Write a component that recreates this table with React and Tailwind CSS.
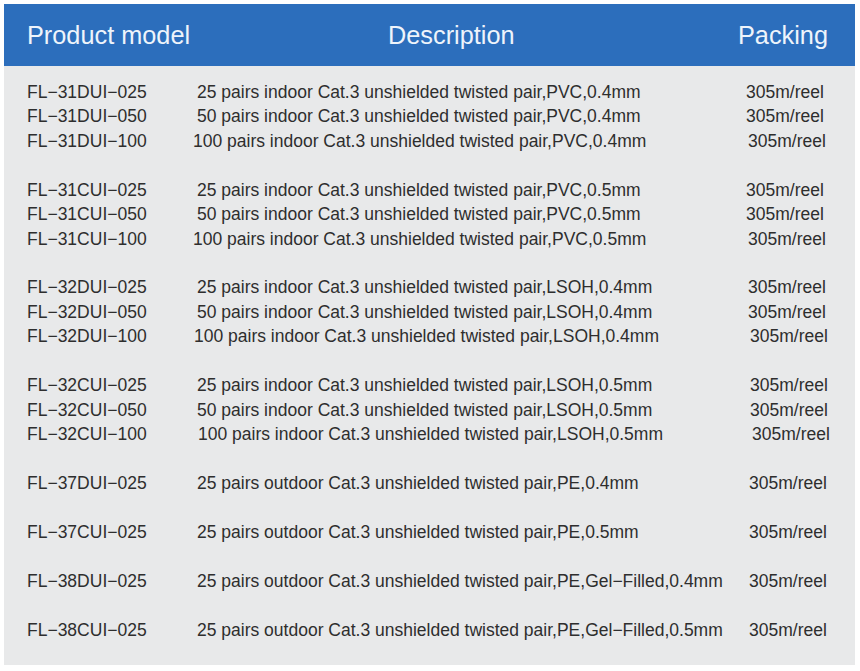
import React from "react";

const rows = [
  { m: "FL−31DUI−025", d: "25 pairs indoor Cat.3 unshielded twisted pair,PVC,0.4mm", dc: "pl-[4px]", pc: "pl-[1px]" },
  { m: "FL−31DUI−050", d: "50 pairs indoor Cat.3 unshielded twisted pair,PVC,0.4mm", dc: "pl-[4px]", pc: "pl-[1px]" },
  { m: "FL−31DUI−100", d: "100 pairs indoor Cat.3 unshielded twisted pair,PVC,0.4mm", dc: "pl-0", pc: "pl-[3px]" },
  null,
  { m: "FL−31CUI−025", d: "25 pairs indoor Cat.3 unshielded twisted pair,PVC,0.5mm", dc: "pl-[4px]", pc: "pl-[1px]" },
  { m: "FL−31CUI−050", d: "50 pairs indoor Cat.3 unshielded twisted pair,PVC,0.5mm", dc: "pl-[4px]", pc: "pl-[1px]" },
  { m: "FL−31CUI−100", d: "100 pairs indoor Cat.3 unshielded twisted pair,PVC,0.5mm", dc: "pl-0", pc: "pl-[3px]" },
  null,
  { m: "FL−32DUI−025", d: "25 pairs indoor Cat.3 unshielded twisted pair,LSOH,0.4mm", dc: "pl-[4px]", pc: "pl-[3px]" },
  { m: "FL−32DUI−050", d: "50 pairs indoor Cat.3 unshielded twisted pair,LSOH,0.4mm", dc: "pl-[4px]", pc: "pl-[3px]" },
  { m: "FL−32DUI−100", d: "100 pairs indoor Cat.3 unshielded twisted pair,LSOH,0.4mm", dc: "pl-[1px]", pc: "pl-[5px]" },
  null,
  { m: "FL−32CUI−025", d: "25 pairs indoor Cat.3 unshielded twisted pair,LSOH,0.5mm", dc: "pl-[4px]", pc: "pl-[5px]" },
  { m: "FL−32CUI−050", d: "50 pairs indoor Cat.3 unshielded twisted pair,LSOH,0.5mm", dc: "pl-[4px]", pc: "pl-[5px]" },
  { m: "FL−32CUI−100", d: "100 pairs indoor Cat.3 unshielded twisted pair,LSOH,0.5mm", dc: "pl-[5px]", pc: "pl-[7px]" },
  null,
  { m: "FL−37DUI−025", d: "25 pairs outdoor Cat.3 unshielded twisted pair,PE,0.4mm", dc: "pl-[4px]", pc: "pl-[4px]" },
  null,
  { m: "FL−37CUI−025", d: "25 pairs outdoor Cat.3 unshielded twisted pair,PE,0.5mm", dc: "pl-[4px]", pc: "pl-[4px]" },
  null,
  { m: "FL−38DUI−025", d: "25 pairs outdoor Cat.3 unshielded twisted pair,PE,Gel−Filled,0.4mm", dc: "pl-[4px]", pc: "pl-[4px]" },
  null,
  { m: "FL−38CUI−025", d: "25 pairs outdoor Cat.3 unshielded twisted pair,PE,Gel−Filled,0.5mm", dc: "pl-[4px]", pc: "pl-[4px]" },
];

export default function App() {
  return (
    <div className="w-[860px] h-[671px] bg-white pt-[4px] pl-[4px] font-['Liberation_Sans',Arial,sans-serif]">
      <div className="w-[851px] h-[661px] bg-[#e8e9ea] flex flex-col">
        <div className="h-[62px] bg-[#2c6ebc] flex items-center text-[25.3px] text-[#eef4fb] pl-[23px] pt-[1px]">
          <div className="w-[361px] leading-none">Product model</div>
          <div className="w-[350px] leading-none">Description</div>
          <div className="leading-none">Packing</div>
        </div>
        <div className="pt-[14.5px] pl-[23px] text-[17.5px] text-[#2e2e2e]">
          {rows.map((r, i) =>
            r === null ? (
              <div key={i} className="h-[24.45px]" />
            ) : (
              <div key={i} className="h-[24.45px] flex items-center whitespace-nowrap leading-none">
                <div className="w-[166px]">{r.m}</div>
                <div className={"w-[552px] " + r.dc}>{r.d}</div>
                <div className={r.pc}>305m/reel</div>
              </div>
            )
          )}
        </div>
      </div>
    </div>
  );
}
